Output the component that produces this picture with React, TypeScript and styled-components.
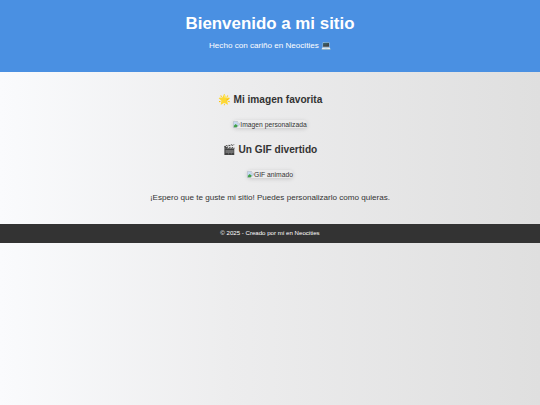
import styled, { createGlobalStyle } from 'styled-components';

const GlobalStyle = createGlobalStyle`
  body {
    margin: 0;
    min-height: 100vh;
    font-family: 'Liberation Sans', Arial, sans-serif;
    font-size: 6.75px;
    color: #333;
    background: linear-gradient(to right, #fafbfd 0%, #ededee 42%, #dfdfdf 100%);
  }
`;

const Header = styled.header`
  box-sizing: border-box;
  height: 71.5px;
  padding-top: 14px;
  text-align: center;
  color: #fff;
  background-color: #4a90e2;
`;

const Title = styled.h1`
  margin: 0;
  font-size: 16.9px;
  line-height: 20px;
`;

const Tagline = styled.p`
  margin: 7px 0 0;
  font-size: 8.1px;
  line-height: 10px;
`;

const Main = styled.main`
  display: flex;
  flex-direction: column;
  align-items: center;
  box-sizing: border-box;
  height: 152px;
  padding-top: 22.5px;
`;

const SectionTitle = styled.h2`
  margin: 0;
  font-size: 10.13px;
  line-height: 12px;
`;

const Picture = styled.div`
  display: flex;
  align-items: center;
  height: 8px;
  margin: 14px 0 16px;
  border-radius: 4px;
  box-shadow: 0 1px 4px rgba(0, 0, 0, 0.15);
`;

const Message = styled.p`
  margin: -1px 0 0;
  font-size: 8.1px;
  line-height: 10px;
`;

const Footer = styled.footer`
  height: 19px;
  font-size: 6.1px;
  line-height: 18px;
  text-align: center;
  color: #fff;
  background-color: #333;
`;

const BrokenImage = () => (
  <svg width="7" height="7" viewBox="0 0 16 16">
    <path d="M1 1h9l5 5v3l-7 6H1z" fill="#c6d9f3" stroke="#a5abb0" />
    <path d="M10 1v5h5" fill="#fff" stroke="#a5abb0" />
    <path d="M2 14V11l4-4 5 4-3 3z" fill="#43a047" />
  </svg>
);

type Props = {
  title: string;
  alt: string;
};

const Section = ({ title, alt }: Props) => (
  <>
    <SectionTitle>{title}</SectionTitle>
    <Picture>
      <BrokenImage />
      {alt}
    </Picture>
  </>
);

export default function App() {
  return (
    <>
      <GlobalStyle />
      <Header>
        <Title>Bienvenido a mi sitio</Title>
        <Tagline>Hecho con cariño en Neocities 💻</Tagline>
      </Header>
      <Main>
        <Section title="🌟 Mi imagen favorita" alt="Imagen personalizada" />
        <Section title="🎬 Un GIF divertido" alt="GIF animado" />
        <Message>¡Espero que te guste mi sitio! Puedes personalizarlo como quieras.</Message>
      </Main>
      <Footer>© 2025 - Creado por mí en Neocities</Footer>
    </>
  );
}
